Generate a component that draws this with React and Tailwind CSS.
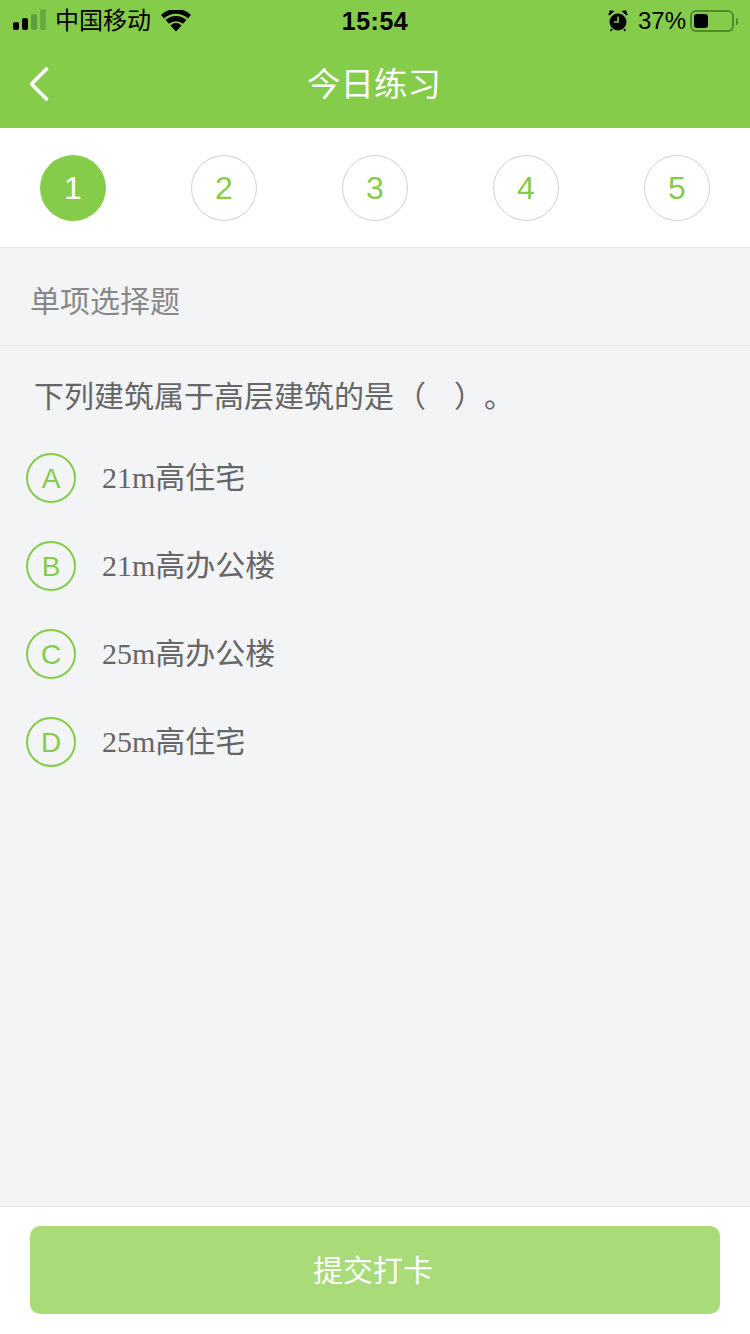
const steps = [1, 2, 3, 4, 5];

const options = [
  { key: "A", text: "21m", rest: "高住宅" },
  { key: "B", text: "21m", rest: "高办公楼" },
  { key: "C", text: "25m", rest: "高办公楼" },
  { key: "D", text: "25m", rest: "高住宅" },
];

const sans = "font-['Liberation_Sans','Noto_Sans_CJK_SC',sans-serif]";

function StatusBar() {
  return (
    <div className="flex h-[42px] items-center justify-between pl-[13px] pr-[12px] text-black">
      <div className="flex w-[200px] items-center">
        <div className="flex h-[22px] items-end gap-[3px] pb-[2px]">
          <span className="h-[8px] w-[6px] rounded-[2px] bg-black" />
          <span className="h-[12px] w-[6px] rounded-[2px] bg-black" />
          <span className="h-[16px] w-[6px] rounded-[2px] bg-[#5f9e3c]" />
          <span className="h-[21px] w-[6px] rounded-[2px] bg-[#68ab42]" />
        </div>
        <span className="ml-[9px] text-[24px] leading-none">中国移动</span>
        <svg className="ml-[10px]" width="30" height="22" viewBox="0 0 30 22" fill="black">
          <path d="M15 21.500 9.400 15.400a8 8 0 0 1 11.200 0Z" />
          <path d="M8 13.800 4.600 10a15.400 15.400 0 0 1 20.800 0L22 13.800a10.600 10.600 0 0 0-14 0Z" />
          <path d="M3.200 8.400 0 4.900a22 22 0 0 1 30 0L26.800 8.400a17.600 17.600 0 0 0-23.600 0Z" />
        </svg>
      </div>
      <span className="pr-[1px] text-[25px] font-bold leading-none tracking-[0.5px]">15:54</span>
      <div className="flex w-[200px] items-center justify-end">
        <svg width="20" height="22" viewBox="0 0 20 22" fill="black">
          <circle cx="10" cy="12" r="8.500" />
          <path d="M1 5 5 1.500 2.500 1ZM19 5 15 1.500 17.500 1Z" stroke="black" strokeWidth="1.500" />
          <path d="M10 6.500V12H6" stroke="#86cc4b" strokeWidth="1.600" fill="none" />
          <path d="M4 19 2.500 21M16 19l1.500 2" stroke="black" strokeWidth="1.600" />
        </svg>
        <span className="ml-[10px] text-[24px] leading-none">37%</span>
        <div className="ml-[4px] flex h-[22px] w-[44px] items-center rounded-[6px] border-2 border-[#4f8a2e] p-[2px]">
          <div className="h-[14px] w-[14px] rounded-[3px] bg-black" />
        </div>
        <div className="ml-[2px] h-[7px] w-[2px] rounded-r-sm bg-[#4f8a2e]" />
      </div>
    </div>
  );
}

export default function App() {
  return (
    <div className={`flex h-[1334px] w-[750px] flex-col overflow-hidden bg-[#f2f4f6] ${sans}`}>
      <header className="h-[128px] bg-[#86cc4b]">
        <StatusBar />
        <div className="relative flex h-[86px] items-center justify-center">
          <svg
            className="absolute left-[28px] top-[24px]"
            width="22"
            height="36"
            viewBox="0 0 22 36"
            fill="none"
            stroke="white"
            strokeWidth="3.600"
            strokeLinecap="round"
            strokeLinejoin="round"
          >
            <path d="M18.500 3 3.500 18l15 15" />
          </svg>
          <h1 className="pr-[2px] text-[33.500px] font-normal leading-none text-white">今日练习</h1>
        </div>
      </header>

      {/* steps */}
      <div className="flex h-[120px] items-start justify-between border-b border-[#e6e8ea] bg-white px-[40px] pt-[27px]">
        {steps.map((n) =>
          n === 1 ? (
            <div
              key={n}
              className="flex h-[66px] w-[66px] items-center justify-center rounded-full bg-[#86cc4b] text-[32px] text-white"
            >
              {n}
            </div>
          ) : (
            <div
              key={n}
              className="flex h-[66px] w-[66px] items-center justify-center rounded-full border border-[#cfd2d4] text-[32px] text-[#86cc4b]"
            >
              {n}
            </div>
          )
        )}
      </div>

      <div className="flex h-[98px] items-center border-b border-[#e6e8ea] pl-[30px] pt-[10px] text-[30px] leading-none text-[#888888]">
        单项选择题
      </div>

      {/* question */}
      <div className="flex-1">
        <div className="ml-[34px] mt-[36px] flex text-[30px] leading-none text-[#666666]">
          <span>下列建筑属于高层建筑的是</span>
          <span className="ml-[2px]">（</span>
          <span className="ml-[28px]">）</span>
          <span>。</span>
        </div>
        <div className="mt-[41px] flex flex-col gap-[38px] pl-[26px]">
          {options.map((o) => (
            <div key={o.key} className="flex items-center">
              <div className="flex h-[50px] w-[50px] items-center justify-center rounded-full border-2 border-[#86cc4b] pt-[2px] text-[28px] leading-none text-[#86cc4b]">
                {o.key}
              </div>
              <span className="ml-[26px] text-[30px] leading-none text-[#666666]">
                <span className="font-['Liberation_Serif',serif]">{o.text}</span>
                {o.rest}
              </span>
            </div>
          ))}
        </div>
      </div>

      <div className="flex h-[128px] justify-center border-t border-[#e6e8ea] bg-white pt-[19px]">
        <button className="h-[88px] w-[690px] rounded-[10px] bg-[#a9dc78] pr-[4px] text-[30px] text-white">
          提交打卡
        </button>
      </div>
    </div>
  );
}
